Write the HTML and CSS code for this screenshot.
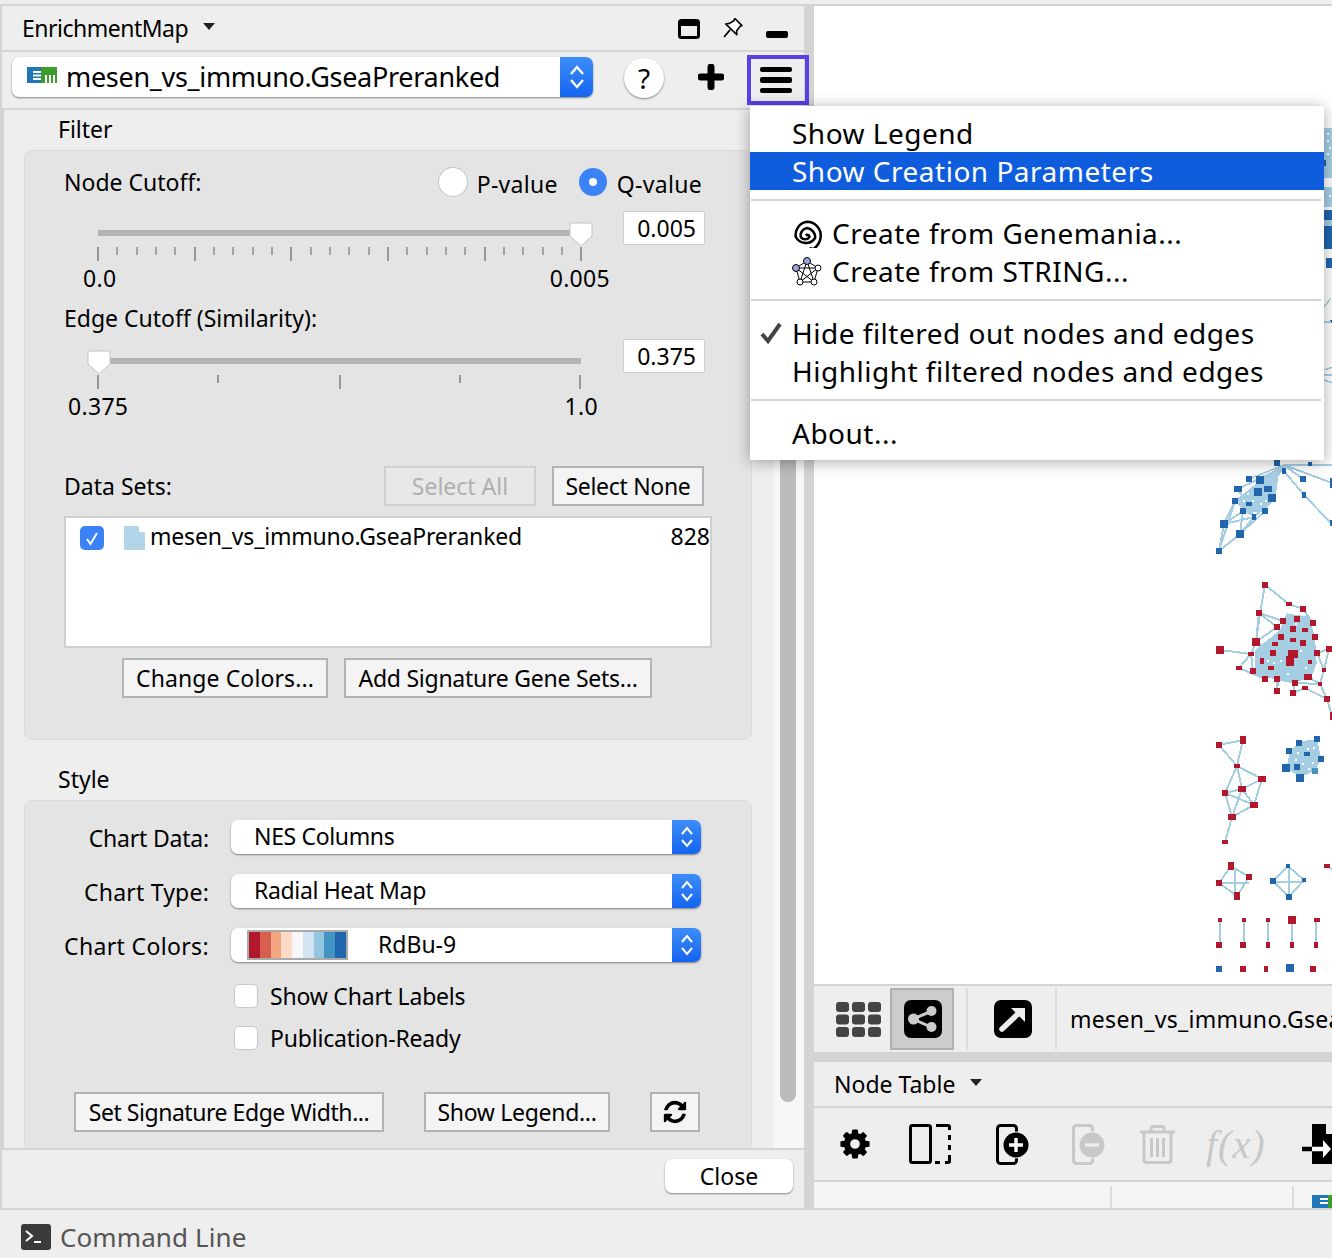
FILE: index.html
```html
<!DOCTYPE html>
<html lang="en">
<head>
  <meta charset="UTF-8" />
  <title>EnrichmentMap</title>
  <link rel="stylesheet" href="styles.css">
</head>
<body>
  <div class="app">
    <div class="workspace">
      <section class="panel">
        <header class="panel-title">
          <span class="panel-name">EnrichmentMap</span>
          <svg class="caret" width="12" height="8" viewBox="0 0 12 8"><path d="M0 1h12L6 8z" fill="#222"/></svg>
          <svg class="icon-window" width="22" height="20" viewBox="0 0 22 20"><rect x="1.5" y="1.5" width="19" height="17" rx="2" fill="none" stroke="#000" stroke-width="3"/><rect x="1" y="1" width="20" height="6" fill="#000"/></svg>
          <svg class="icon-pin" width="20" height="20" viewBox="1 1 18.500 18.500"><path d="M12 1.5L18.5 8l-2 1-3 4 .3 3.500L3.500 6.500 7 6l4-2.500z" fill="#fff" stroke="#000" stroke-width="1.500" stroke-linejoin="round"/><path d="M7.500 12L2 18.500" stroke="#000" stroke-width="1.500"/></svg>
          <span class="icon-min"></span>
        </header>

        <div class="panel-toolbar">
          <div class="combo combo-map">
            <svg class="logo" width="30" height="16" viewBox="0 0 30 16"><rect width="15" height="16" fill="#1f77b4"/><path d="M6 4h8v2H6zM6 7.500h8v2H6zM6 11h8v2H6z" fill="#fff"/><rect x="14" width="16" height="16" fill="#3c9c2c"/><path d="M18 8h2v8h-2zM22 8h2v8h-2zM26 8h2v8h-2z" fill="#fff"/></svg>
            <span class="combo-text">mesen_vs_immuno.GseaPreranked</span>
            <span class="combo-arrows combo-arrows-lg"><svg width="16" height="26" viewBox="0 0 16 26"><path d="M2 10l6-7 6 7M2 16l6 7 6-7" fill="none" stroke="#fff" stroke-width="2.400"/></svg></span>
          </div>
          <button class="help">?</button>
          <svg class="icon-plus" width="26" height="26" viewBox="0 0 26 26"><path d="M13 3v20M3 13h20" stroke="#000" stroke-width="7" stroke-linecap="round"/></svg>
          <div class="menu-button">
            <span></span><span></span><span></span>
          </div>
        </div>

        <div class="scroll">
          <div class="scroll-content">
            <h2 class="section-title">Filter</h2>
            <div class="group group-filter">
              <div class="cutoff-head">
                <span class="cutoff-label">Node Cutoff:</span>
                <span class="radio"></span><span class="radio-text">P-value</span>
                <span class="radio radio-on"></span><span class="radio-text">Q-value</span>
              </div>

              <div class="slider-row">
                <div class="slider">
                  <div class="track"></div>
                  <svg class="thumb thumb-end" width="24" height="25" viewBox="0 0 24 25"><path d="M1 3a2 2 0 012-2h18a2 2 0 012 2v11l-11 10L1 14z" fill="#fff" stroke="#c4c4c4"/></svg>
                  <svg class="ticks" width="500" height="14" viewBox="0 0 500 14">
                    <path d="M1 0v14M98 0v14M194 0v14M291 0v14M388 0v14M484 0v14" stroke="#777" stroke-width="1.400"/>
                    <path d="M20 0v8M40 0v8M59 0v8M78 0v8M117 0v8M136 0v8M156 0v8M175 0v8M214 0v8M233 0v8M252 0v8M272 0v8M310 0v8M330 0v8M349 0v8M368 0v8M407 0v8M426 0v8M446 0v8M465 0v8" stroke="#888" stroke-width="1.400"/>
                  </svg>
                  <div class="scale scale-node"><span>0.0</span><span>0.005</span></div>
                </div>
                <div class="value">0.005</div>
              </div>

              <div class="edge-label">Edge Cutoff (Similarity):</div>

              <div class="slider-row slider-row-edge">
                <div class="slider">
                  <div class="track"></div>
                  <svg class="thumb thumb-start" width="24" height="25" viewBox="0 0 24 25"><path d="M1 3a2 2 0 012-2h18a2 2 0 012 2v11l-11 10L1 14z" fill="#fff" stroke="#c4c4c4"/></svg>
                  <svg class="ticks" width="500" height="14" viewBox="0 0 500 14">
                    <path d="M1 0v14M243 0v14M483 0v14" stroke="#777" stroke-width="1.400"/>
                    <path d="M121 0v8M363 0v8" stroke="#777" stroke-width="1.400"/>
                  </svg>
                  <div class="scale scale-edge"><span>0.375</span><span>1.0</span></div>
                </div>
                <div class="value">0.375</div>
              </div>

              <div class="datasets-head">
                <span class="datasets-label">Data Sets:</span>
                <button class="btn btn-disabled btn-select">Select All</button>
                <button class="btn btn-select">Select None</button>
              </div>

              <div class="dataset-list">
                <div class="dataset">
                  <span class="check check-on"><svg width="24" height="24" viewBox="0 0 24 24"><path d="M7 13l3.500 5L17 7" fill="none" stroke="#fff" stroke-width="2"/></svg></span>
                  <svg class="file" width="22" height="24" viewBox="0 0 22 24"><path d="M0 0h14l7 7v17H0z" fill="#b2d5e8"/><path d="M15 0l6 6h-6z" fill="#fff"/></svg>
                  <span class="dataset-name">mesen_vs_immuno.GseaPreranked</span>
                  <span class="dataset-count">828</span>
                </div>
              </div>

              <div class="btn-row btn-row-colors">
                <button class="btn btn-colors">Change Colors...</button>
                <button class="btn btn-signature">Add Signature Gene Sets...</button>
              </div>
            </div>

            <h2 class="section-title section-title-style">Style</h2>
            <div class="group group-style">
              <div class="form-row">
                <label class="form-label form-label-data">Chart Data:</label>
                <div class="combo combo-form">
                  <span class="combo-text">NES Columns</span>
                  <span class="combo-arrows"><svg width="14" height="24" viewBox="0 0 14 24"><path d="M2 9l5-6 5 6M2 15l5 6 5-6" fill="none" stroke="#fff" stroke-width="2"/></svg></span>
                </div>
              </div>
              <div class="form-row">
                <label class="form-label">Chart Type:</label>
                <div class="combo combo-form">
                  <span class="combo-text">Radial Heat Map</span>
                  <span class="combo-arrows"><svg width="14" height="24" viewBox="0 0 14 24"><path d="M2 9l5-6 5 6M2 15l5 6 5-6" fill="none" stroke="#fff" stroke-width="2"/></svg></span>
                </div>
              </div>
              <div class="form-row">
                <label class="form-label form-label-colors">Chart Colors:</label>
                <div class="combo combo-form combo-palette">
                  <div class="swatches">
                    <i class="sw1"></i><i class="sw2"></i><i class="sw3"></i><i class="sw4"></i><i class="sw5"></i><i class="sw6"></i><i class="sw7"></i><i class="sw8"></i><i class="sw9"></i>
                  </div>
                  <span class="combo-text">RdBu-9</span>
                  <span class="combo-arrows"><svg width="14" height="24" viewBox="0 0 14 24"><path d="M2 9l5-6 5 6M2 15l5 6 5-6" fill="none" stroke="#fff" stroke-width="2"/></svg></span>
                </div>
              </div>

              <div class="check-row check-row-first"><span class="check"></span>Show Chart Labels</div>
              <div class="check-row"><span class="check"></span>Publication-Ready</div>

              <div class="btn-row btn-row-style">
                <button class="btn btn-edge">Set Signature Edge Width...</button>
                <button class="btn btn-legend">Show Legend...</button>
                <button class="btn btn-refresh">
                  <svg width="26" height="26" viewBox="0 0 1792 1792"><path d="M1639 1056q0 5-1 7-64 268-268 434.5t-478 166.5q-146 0-282.5-55t-243.5-157l-129 129q-19 19-45 19t-45-19-19-45v-448q0-26 19-45t45-19h448q26 0 45 19t19 45-19 45l-137 137q71 66 161 102t187 36q134 0 250-65t186-179q11-17 53-117 8-23 30-23h192q13 0 22.5 9.5t9.5 22.5zm25-800v448q0 26-19 45t-45 19h-448q-26 0-45-19t-19-45 19-45l138-138q-148-137-349-137-134 0-250 65t-186 179q-11 17-53 117-8 23-30 23h-199q-13 0-22.5-9.5t-9.5-22.5v-7q65-268 270-434.5t480-166.5q146 0 284 55.5t245 156.5l130-129q19-19 45-19t45 19 19 45z"/></svg>
                </button>
              </div>
            </div>
          </div>
          <div class="scrollbar"><div class="scrollbar-thumb"></div></div>
        </div>

        <footer class="panel-footer">
          <button class="close">Close</button>
        </footer>
      </section>

      <section class="main">
        <svg class="network" width="518" height="978" viewBox="814 6 518 978">
          <g transform="translate(1280 100) scale(.3333)">
            <path d="M133 85h23v150h-23zM133 260h23v60h-23zM133 360h23v20h-23z" fill="#a6cee3"/>
            <path d="M133 330h23v30h-23zM133 378h23v70h-23zM138 475h18v30h-18zM133 180h6v18h-6zM150 660h6v10h-6z" fill="#2166ac"/>
            <path d="M133 620l20-25M133 667h20M133 810l23-8M133 825h23M133 840l23 8" stroke="#a6cee3" stroke-width="5" fill="none"/>
            <path d="M142 100h6v6h-6zM142 120h6v6h-6zM148 140h6v6h-6zM142 160h6v6h-6zM146 285h6v6h-6z" fill="#fff"/>
          </g>

          <g transform="translate(1180 450) scale(.3333)">
            <path d="M172 148L240 90 300 48 285 150 250 185 190 190z" fill="#a6cee3"/>
            <path d="M312 45L207 87M312 50L264 117M312 50L174 117M312 50L165 153M312 45H456M312 63L372 135 453 219M312 45L369 87M312 45L456 99M132 222L117 303 180 252M132 222L165 153M132 222L222 201M132 222L189 183M180 252L222 201M180 252L189 183M165 153L117 303M165 153L222 201M174 117L222 201M255 183L180 252M276 144L222 201" stroke="#a6cee3" stroke-width="6" fill="none"/>
            <path d="M200 130h6v6h-6zM215 150h6v6h-6zM240 160h6v6h-6zM190 150h6v6h-6zM255 150h6v6h-6z" fill="#fff"/>
            <g fill="#2166ac">
              <rect x="282" y="29" width="18" height="18"/><rect x="384" y="36" width="12" height="12"/><rect x="306" y="54" width="12" height="18"/><rect x="360" y="78" width="18" height="18"/><rect x="450" y="84" width="6" height="30"/><rect x="198" y="78" width="18" height="18"/><rect x="228" y="78" width="24" height="24"/><rect x="162" y="108" width="24" height="18"/><rect x="222" y="114" width="24" height="24"/><rect x="252" y="108" width="24" height="18"/><rect x="156" y="144" width="18" height="18"/><rect x="198" y="156" width="18" height="12"/><rect x="264" y="132" width="24" height="24"/><rect x="180" y="174" width="18" height="18"/><rect x="246" y="174" width="18" height="18"/><rect x="216" y="192" width="12" height="18"/><rect x="366" y="126" width="12" height="18"/><rect x="120" y="210" width="24" height="24"/><rect x="168" y="240" width="24" height="24"/><rect x="108" y="294" width="18" height="18"/><rect x="450" y="210" width="6" height="18"/>
            </g>
            <path d="M225 600L300 540 320 490 385 500 405 560 410 640 395 680 340 700 290 690 225 670z" fill="#a6cee3"/>
            <path d="M255 405L240 490 228 576M255 405L327 462 369 477M237 489L291 531M237 489L309 513M120 600L213 612M213 612L228 576M213 612L177 654M213 612L219 663M219 663L255 687M411 609L447 597 432 660 420 702 441 747 456 798M441 747L375 714M291 723L291 687M339 729L345 699M339 729L375 714M384 681L420 702M300 640L291 723M255 687L345 640M219 663L330 633M228 576L330 633M237 489L228 576M411 609L432 660M177 654L255 687M345 699L420 702M369 477L399 519M291 531L228 576" stroke="#a6cee3" stroke-width="6" fill="none"/>
            <path d="M260 630h6v6h-6zM280 636h6v6h-6zM300 630h6v6h-6zM360 600h6v6h-6zM375 650h6v6h-6zM345 520h6v6h-6zM320 670h6v6h-6z" fill="#fff"/>
            <g fill="#b2182b">
              <rect x="246" y="396" width="18" height="18"/><rect x="318" y="456" width="18" height="12"/><rect x="360" y="468" width="18" height="18"/><rect x="228" y="480" width="18" height="18"/><rect x="342" y="498" width="18" height="18"/><rect x="390" y="510" width="18" height="18"/><rect x="300" y="504" width="18" height="18"/><rect x="282" y="522" width="18" height="18"/><rect x="330" y="528" width="18" height="18"/><rect x="366" y="534" width="18" height="12"/><rect x="396" y="552" width="18" height="18"/><rect x="294" y="552" width="18" height="18"/><rect x="330" y="564" width="18" height="12"/><rect x="216" y="564" width="24" height="24"/><rect x="276" y="576" width="18" height="12"/><rect x="360" y="570" width="18" height="18"/><rect x="108" y="588" width="24" height="24"/><rect x="204" y="606" width="18" height="12"/><rect x="270" y="600" width="18" height="18"/><rect x="324" y="600" width="30" height="24"/><rect x="402" y="600" width="18" height="18"/><rect x="438" y="588" width="18" height="18"/><rect x="240" y="624" width="12" height="18"/><rect x="318" y="618" width="24" height="30"/><rect x="384" y="630" width="12" height="12"/><rect x="168" y="648" width="18" height="12"/><rect x="264" y="648" width="18" height="12"/><rect x="210" y="654" width="18" height="18"/><rect x="426" y="654" width="12" height="12"/><rect x="246" y="678" width="18" height="18"/><rect x="282" y="678" width="18" height="18"/><rect x="372" y="672" width="24" height="18"/><rect x="336" y="690" width="18" height="18"/><rect x="414" y="696" width="12" height="12"/><rect x="366" y="708" width="18" height="12"/><rect x="282" y="714" width="18" height="18"/><rect x="330" y="720" width="18" height="18"/><rect x="432" y="738" width="18" height="18"/><rect x="450" y="786" width="6" height="24"/>
            </g>
          </g>

          <g transform="translate(1180 720) scale(.3333)">
            <path d="M117 75L189 60 171 138ZM171 138L246 177 186 207 171 138 135 219 186 207 222 255 246 177M135 219L222 255M135 219L156 291 186 207M222 255L156 291 135 366M153 438L207 471 171 528 117 489ZM117 489H207M165 450V520M324 438L372 480 327 531 279 483ZM279 487H372M326 438V531M441 438L456 447M120 600V675M192 600V675M264 600V675M336 600V675M408 600V675" stroke="#a6cee3" stroke-width="6" fill="none"/>
            <path d="M330 90L370 62 411 60 424 115 405 153 360 172 320 144z" fill="#a6cee3"/>
            <path d="M350 95h6v6h-6zM380 85h6v6h-6zM395 125h6v6h-6zM365 130h6v6h-6zM345 118h6v6h-6zM385 145h6v6h-6zM400 80h6v6h-6z" fill="#fff"/>
            <g fill="#b2182b">
              <rect x="108" y="66" width="18" height="18"/><rect x="180" y="48" width="18" height="24"/><rect x="162" y="132" width="18" height="12"/><rect x="234" y="168" width="24" height="18"/><rect x="126" y="210" width="18" height="18"/><rect x="174" y="198" width="24" height="18"/><rect x="210" y="246" width="24" height="18"/><rect x="144" y="282" width="24" height="18"/><rect x="126" y="360" width="18" height="12"/>
              <rect x="144" y="426" width="18" height="24"/><rect x="198" y="462" width="18" height="18"/><rect x="108" y="480" width="18" height="18"/><rect x="162" y="516" width="18" height="24"/><rect x="432" y="432" width="18" height="12"/>
              <rect x="114" y="594" width="12" height="12"/><rect x="186" y="594" width="12" height="12"/><rect x="258" y="594" width="12" height="12"/><rect x="324" y="588" width="24" height="24"/><rect x="402" y="594" width="18" height="12"/>
              <rect x="108" y="666" width="18" height="18"/><rect x="180" y="666" width="18" height="18"/><rect x="258" y="666" width="12" height="18"/><rect x="330" y="666" width="12" height="18"/><rect x="402" y="666" width="12" height="18"/>
              <rect x="180" y="738" width="18" height="18"/><rect x="252" y="738" width="12" height="18"/><rect x="390" y="738" width="18" height="18"/>
            </g>
            <g fill="#2166ac">
              <rect x="402" y="48" width="18" height="18"/><rect x="348" y="60" width="18" height="18"/><rect x="318" y="84" width="18" height="18"/><rect x="372" y="96" width="18" height="12"/><rect x="414" y="108" width="18" height="18"/><rect x="342" y="132" width="18" height="18"/><rect x="306" y="132" width="24" height="24"/><rect x="348" y="162" width="24" height="24"/>
              <rect x="318" y="432" width="12" height="12"/><rect x="366" y="474" width="12" height="12"/><rect x="270" y="474" width="18" height="18"/><rect x="318" y="522" width="18" height="18"/>
              <rect x="108" y="738" width="18" height="18"/><rect x="318" y="732" width="24" height="24"/>
            </g>
            <rect x="396" y="144" width="18" height="18" fill="#4393c3"/>
          </g>
        </svg>

        <div class="view-bar">
          <svg class="icon-grid" width="45" height="35" viewBox="0 0 45 35" fill="#444">
            <rect width="13" height="10" rx="3"/><rect x="16" width="13" height="10" rx="3"/><rect x="32" width="13" height="10" rx="3"/>
            <rect y="12.500" width="13" height="10" rx="3"/><rect x="16" y="12.500" width="13" height="10" rx="3"/><rect x="32" y="12.500" width="13" height="10" rx="3"/>
            <rect y="25" width="13" height="10" rx="3"/><rect x="16" y="25" width="13" height="10" rx="3"/><rect x="32" y="25" width="13" height="10" rx="3"/>
          </svg>
          <div class="view-active">
            <svg width="38" height="38" viewBox="0 0 38 38"><rect width="38" height="38" rx="7" fill="#000"/><path d="M28 11L9 19l18 8" fill="none" stroke="#ccc" stroke-width="3"/><circle cx="9.500" cy="19" r="5.500" fill="#ccc"/><circle cx="27.500" cy="11" r="5" fill="#ccc"/><circle cx="27.500" cy="27" r="5" fill="#ccc"/></svg>
          </div>
          <span class="view-sep"></span>
          <svg class="icon-detach" width="38" height="38" viewBox="0 0 38 38"><rect width="38" height="38" rx="7" fill="#000"/><path d="M8 29L26 12" stroke="#eee" stroke-width="5.500" stroke-linecap="round"/><path d="M17 8h14v14z" fill="#eee"/></svg>
          <span class="view-sep view-sep-2"></span>
          <span class="view-name">mesen_vs_immuno.GseaPreranked</span>
        </div>

        <div class="table-title">
          <span>Node Table</span>
          <svg class="caret" width="12" height="8" viewBox="0 0 12 8"><path d="M0 1h12L6 8z" fill="#222"/></svg>
        </div>

        <div class="table-tools">
          <svg class="tool-gear" width="34" height="34" viewBox="0 0 1792 1792"><path d="M1152 896q0-106-75-181t-181-75-181 75-75 181 75 181 181 75 181-75 75-181zm512-109v222q0 12-8 23t-20 13l-185 28q-19 54-39 91 35 50 107 138 10 12 10 25t-9 23q-27 37-99 108t-94 71q-12 0-26-9l-138-108q-44 23-91 38-16 136-29 186-7 28-36 28h-222q-14 0-24.5-8.5t-11.5-21.5l-28-184q-49-16-90-37l-141 107q-10 9-25 9-14 0-25-11-126-114-165-168-7-10-7-23 0-12 8-23 15-21 51-66.5t54-70.5q-27-50-41-99l-183-27q-13-2-21-12.5t-8-23.5v-222q0-12 8-23t19-13l186-28q14-46 39-92-40-57-107-138-10-12-10-24 0-10 9-23 26-36 98.5-107.5t94.5-71.5q13 0 26 10l138 107q44-23 91-38 16-136 29-186 7-28 36-28h222q14 0 24.5 8.5t11.5 21.5l28 184q49 16 90 37l142-107q9-9 24-9 13 0 25 10 129 119 165 170 7 8 7 22 0 12-8 23-15 21-51 66.5t-54 70.5q26 50 41 98l183 28q13 2 21 12.5t8 23.5z"/></svg>
          <svg class="tool-columns" width="42" height="40" viewBox="0 0 42 40" fill="none" stroke="#000" stroke-width="3"><rect x="1.500" y="1.500" width="20" height="37" rx="2"/><path d="M27 1.500h12a1.500 1.500 0 011.500 1.500v3M40.500 11v5M40.500 21v5M40.500 31v6a1.500 1.500 0 01-1.500 1.500h-3M31 38.500h-5"/></svg>
          <svg class="tool-add" width="33" height="41" viewBox="0 0 33 41"><rect x="1.500" y="1.500" width="19" height="38" rx="3" fill="none" stroke="#000" stroke-width="3"/><circle cx="20" cy="21" r="13.500" fill="#eee"/><circle cx="20" cy="21" r="12.500" fill="#000"/><path d="M20 14v14M13 21h14" stroke="#fff" stroke-width="3.400"/></svg>
          <svg class="tool-remove" width="33" height="41" viewBox="0 0 33 41"><rect x="1.500" y="1.500" width="19" height="38" rx="3" fill="none" stroke="#c8c8c8" stroke-width="3"/><circle cx="20" cy="21" r="13.500" fill="#eee"/><circle cx="20" cy="21" r="12.500" fill="#c8c8c8"/><path d="M13 21h14" stroke="#eee" stroke-width="3.400"/></svg>
          <svg class="tool-trash" width="35" height="39" viewBox="0 0 35 39" fill="none" stroke="#c8c8c8" stroke-width="3"><path d="M0 7h35M11 7V4a2.500 2.500 0 012.500-2.500h8A2.500 2.500 0 0124 4v3"/><path d="M4 7v28a2.500 2.500 0 002.500 2.500h22A2.500 2.500 0 0031 35V7"/><path d="M11.500 13v19M17.500 13v19M23.500 13v19"/></svg>
          <span class="tool-fx">f(x)</span>
          <svg class="tool-import" width="30" height="40" viewBox="0 0 30 40"><path d="M10 0h14l6 6v34H10z" fill="#000"/><path d="M26 0l4 4v6h-6V0z" fill="#eee"/><path d="M0 25h20" stroke="#000" stroke-width="4.500" stroke-linecap="round"/><path d="M10 25h13" stroke="#fff" stroke-width="4.500"/><path d="M21 16l8 9-8 9z" fill="#fff"/></svg>
        </div>

        <div class="table-head">
          <span class="head-cell head-cell-a"></span>
          <span class="head-cell head-cell-b"></span>
          <svg class="head-logo" width="20" height="13" viewBox="0 0 20 13"><rect width="16" height="13" fill="#1f77b4"/><path d="M8 3h8v2H8zM8 7h8v2H8z" fill="#fff"/><rect x="16" width="4" height="13" fill="#3c9c2c"/></svg>
        </div>
      </section>
    </div>

    <footer class="command">
      <svg width="30" height="26" viewBox="0 0 30 26"><rect width="30" height="26" rx="3" fill="#3a3a3a"/><path d="M5 7l6 5-6 5" fill="none" stroke="#fff" stroke-width="2"/><path d="M13 18h7" stroke="#fff" stroke-width="2"/></svg>
      <span>Command Line</span>
    </footer>

    <div class="menu">
      <div class="menu-item">Show Legend</div>
      <div class="menu-item menu-item-active">Show Creation Parameters</div>
      <div class="menu-sep"></div>
      <div class="menu-item menu-item-icon">
        <svg width="30" height="30" viewBox="2 0 24 24" fill="none" stroke="#000" stroke-width="2"><path d="M13 14a1.800 1.800 0 013 1 4 4 0 01-7 0 6 6 0 015-7 7.500 7.500 0 016.500 8A9 9 0 015 15 10.500 10.500 0 0114 3a11 11 0 0111 11c0 5-2.500 8.500-6 11l-3-1"/></svg>
        Create from Genemania...
      </div>
      <div class="menu-item menu-item-icon">
        <svg width="30" height="30" viewBox="0 0 30 30" fill="none" stroke="#000" stroke-width="1"><path d="M15 5L26 12 22 26H8L4 12ZM15 5L22 26M15 5L8 26M4 12H26M4 12L22 26M26 12L8 26"/><circle cx="15" cy="5" r="3.500" fill="#9aa6d8"/><circle cx="4" cy="12" r="3.500" fill="#9aa6d8"/><circle cx="26" cy="12" r="3" fill="#fff"/><circle cx="8" cy="26" r="3" fill="#fff"/><circle cx="22" cy="26" r="3" fill="#fff"/></svg>
        Create from STRING...
      </div>
      <div class="menu-sep"></div>
      <div class="menu-item">
        <svg class="menu-check" width="22" height="22" viewBox="0 0 22 22"><path d="M2 12l6 7L20 2" fill="none" stroke="#444" stroke-width="4"/></svg>
        Hide filtered out nodes and edges
      </div>
      <div class="menu-item">Highlight filtered nodes and edges</div>
      <div class="menu-sep"></div>
      <div class="menu-item">About...</div>
    </div>
  </div>
</body>
</html>
```

FILE: styles.css
```css
* {
  box-sizing: border-box;
}

body {
  margin: 0;
  background-color: #eee;
  color: #000;
  font-family: "Noto Sans", sans-serif;
  font-size: 23px;
  overflow: hidden;
}

button {
  font-family: inherit;
  font-size: inherit;
  color: inherit;
  padding: 0;
}

svg {
  flex-shrink: 0;
}

.app {
  position: relative;
  width: 1332px;
  height: 1258px;
  padding-top: 4px;
}

.workspace {
  display: flex;
  height: 1206px;
  padding-top: 2px;
  padding-bottom: 2px;
  background-color: #d4d4d4;
}

/* left panel */
.panel {
  display: flex;
  flex-direction: column;
  gap: 2px;
  width: 804px;
  padding-left: 2px;
  flex-shrink: 0;
}

.panel-title {
  display: flex;
  align-items: center;
  height: 44px;
  padding-left: 20px;
  background-color: #eee;
}

.panel-name {
  line-height: 44px;
  letter-spacing: -0.5px;
}

.caret {
  margin-left: 15px;
  margin-bottom: 4px;
}

.icon-window {
  margin-left: auto;
  margin-top: 2px;
}

.icon-pin {
  margin-left: 23px;
}

.icon-min {
  width: 22px;
  height: 7px;
  margin: 12px 16px 0 23px;
  border-radius: 2px;
  background-color: #000;
}

.panel-toolbar {
  display: flex;
  align-items: center;
  height: 56px;
  padding-left: 10px;
  background-color: #eee;
}

.combo {
  display: flex;
  align-items: center;
  flex-shrink: 0;
  background-color: #fff;
  border-radius: 7px;
  box-shadow: 0 1px 2px rgba(0, 0, 0, 0.45);
}

.combo-map {
  width: 581px;
  height: 40px;
  margin-bottom: 6px;
  padding-left: 15px;
  font-size: 27px;
  letter-spacing: -0.3px;
}

.combo-map .combo-text {
  margin-bottom: 1px;
}

.logo {
  margin-right: 9px;
  margin-bottom: 4px;
}

.combo-arrows {
  display: flex;
  align-items: center;
  justify-content: center;
  align-self: stretch;
  width: 29px;
  margin-left: auto;
  border-radius: 0 7px 7px 0;
  background: linear-gradient(#3d8df8, #1464f0);
}

.combo-arrows-lg {
  width: 33px;
}

.help {
  flex-shrink: 0;
  width: 40px;
  height: 40px;
  margin-left: 31px;
  margin-bottom: 4px;
  border: none;
  border-radius: 50%;
  background-color: #fff;
  box-shadow: 0 1px 2px rgba(0, 0, 0, 0.45);
  font-size: 28px;
  line-height: 38px;
}

.icon-plus {
  margin-left: 34px;
  margin-bottom: 6px;
}

.menu-button {
  display: flex;
  flex-direction: column;
  gap: 5px;
  align-items: center;
  justify-content: center;
  flex-shrink: 0;
  width: 62px;
  height: 50px;
  margin-left: 23px;
  padding-right: 4px;
  border: 4px solid #5b3fe4;
}

.menu-button span {
  width: 32px;
  height: 5.5px;
  border-radius: 2px;
  background-color: #000;
}

.scroll {
  display: flex;
  height: 1038px;
  margin-left: 2px;
  background-color: #eee;
}

.scroll-content {
  width: 770px;
  padding: 0 22px 0 20px;
}

.scrollbar {
  width: 30px;
  background-color: #f7f7f7;
}

.scrollbar-thumb {
  width: 16px;
  height: 702px;
  margin: 290px 0 0 6px;
  border-radius: 8px;
  background-color: #bbb;
}

.section-title {
  height: 40px;
  margin: 0;
  padding-left: 34px;
  font-size: 23px;
  font-weight: normal;
  line-height: 38px;
}

.section-title-style {
  height: 60px;
  padding-top: 20px;
}

.group {
  padding: 0 39px;
  border: 1px solid #dcdcdc;
  border-radius: 8px;
  background-color: #e4e4e4;
}

.group-filter {
  height: 590px;
}

.group-style {
  height: 348px;
  border-bottom: none;
  border-radius: 8px 8px 0 0;
}

/* filter group */
.cutoff-head {
  display: flex;
  align-items: center;
  height: 34px;
  margin-top: 14px;
  padding-right: 10px;
}

.cutoff-label {
  margin-right: auto;
}

.radio {
  flex-shrink: 0;
  width: 28px;
  height: 28px;
  border-radius: 50%;
  background-color: #fff;
  box-shadow: 0 0 0 1px #c4c4c4;
}

.radio-on {
  margin-left: 21px;
  border: 10px solid #3b82f6;
  box-shadow: none;
}

.radio-text {
  margin-left: 10px;
  margin-top: 4px;
  letter-spacing: 0.3px;
}

.slider-row {
  display: flex;
  margin-top: 12px;
}

.slider-row-edge {
  margin-top: 9px;
}

.slider {
  position: relative;
  width: 559px;
  height: 79px;
  padding-top: 19px;
}

.track {
  width: 483px;
  height: 6px;
  margin-left: 34px;
  background-color: #b4b4b4;
}

.thumb {
  position: absolute;
  top: 11px;
}

.thumb-end {
  left: 505px;
}

.thumb-start {
  left: 23px;
}

.ticks {
  display: block;
  margin: 11px 0 0 33px;
}

.scale {
  display: flex;
  justify-content: space-between;
  margin-top: 5px;
  line-height: 24px;
  letter-spacing: 0.3px;
}

.scale-node {
  width: 527px;
  margin-left: 19px;
}

.scale-edge {
  width: 530px;
  margin-left: 4px;
}

.value {
  width: 82px;
  height: 34px;
  padding-right: 8px;
  border: 1px solid #d0d0d0;
  background-color: #fff;
  line-height: 32px;
  text-align: right;
}

.edge-label {
  margin-top: 16px;
  line-height: 24px;
}

.datasets-head {
  display: flex;
  align-items: center;
  height: 40px;
  margin-top: 48px;
  padding-right: 8px;
  gap: 16px;
}

.datasets-label {
  margin-right: auto;
}

.btn {
  flex-shrink: 0;
  height: 40px;
  border: 2px solid #b4b4b4;
  background-color: #f4f4f4;
  line-height: 34px;
  letter-spacing: -0.3px;
}

.btn-disabled {
  border-color: #cfcfcf;
  background-color: #e8e8e8;
  color: #b0b0b0;
  letter-spacing: 0;
}

.btn-select {
  width: 152px;
}

.dataset-list {
  height: 132px;
  margin-top: 10px;
  border: 2px solid #d0d0d0;
  background-color: #fff;
}

.dataset {
  display: flex;
  align-items: center;
  height: 36px;
  margin-top: 6px;
  padding: 0 0 8px 14px;
}

.check {
  flex-shrink: 0;
  width: 24px;
  height: 24px;
  border: 1px solid #c8c8c8;
  border-radius: 5px;
  background-color: #fff;
}

.check-on {
  border: none;
  background-color: #3b82f6;
}

.check-on svg {
  display: block;
}

.file {
  margin-left: 20px;
}

.dataset-name {
  margin-left: 4px;
  margin-bottom: 4px;
  letter-spacing: -0.18px;
}

.dataset-count {
  margin-left: auto;
  margin-bottom: 4px;
}

.btn-row {
  display: flex;
}

.btn-row-colors {
  gap: 16px;
  margin: 10px 0 0 58px;
}

.btn-colors {
  width: 206px;
  letter-spacing: 0.1px;
}

.btn-signature {
  width: 308px;
  letter-spacing: -0.25px;
}

/* style group */
.form-row {
  display: flex;
  align-items: center;
  gap: 22px;
  margin-top: 20px;
}

.form-row:first-child {
  margin-top: 19px;
}

.form-label {
  width: 145px;
  padding-top: 2px;
  line-height: 28px;
  text-align: right;
  letter-spacing: 0.2px;
}

.form-label-data {
  letter-spacing: -0.2px;
}

.form-label-colors {
  letter-spacing: 0.35px;
}

.combo-form {
  width: 470px;
  height: 34px;
  padding-left: 23px;
  letter-spacing: -0.35px;
}

.combo-form .combo-text {
  margin-bottom: 2px;
}

.combo-palette {
  padding-left: 16px;
  letter-spacing: 0;
}

.swatches {
  display: flex;
  width: 101px;
  height: 30px;
  margin-right: 30px;
  border: 2px solid #aaa;
}

.swatches i {
  flex: 1;
}

.sw1 { background-color: #b2182b; }
.sw2 { background-color: #d6604d; }
.sw3 { background-color: #f4a582; }
.sw4 { background-color: #fddbc7; }
.sw5 { background-color: #f7f7f7; }
.sw6 { background-color: #d1e5f0; }
.sw7 { background-color: #92c5de; }
.sw8 { background-color: #4393c3; }
.sw9 { background-color: #2166ac; }

.check-row {
  display: flex;
  align-items: center;
  gap: 12px;
  height: 24px;
  margin: 18px 0 0 170px;
  letter-spacing: -0.2px;
}

.check-row-first {
  margin-top: 22px;
}

.btn-row-style {
  gap: 40px;
  margin: 42px 0 0 10px;
}

.btn-edge {
  width: 310px;
  letter-spacing: -0.45px;
}

.btn-legend {
  width: 186px;
}

.btn-refresh {
  width: 50px;
}

.btn-refresh svg {
  display: block;
  margin: auto;
}

.panel-footer {
  display: flex;
  justify-content: flex-end;
  height: 58px;
  padding: 9px 11px 0 0;
  background-color: #eee;
}

.close {
  width: 128px;
  height: 34px;
  border: none;
  border-radius: 7px;
  background-color: #fff;
  box-shadow: 0 1px 2px rgba(0, 0, 0, 0.45);
  line-height: 30px;
}

/* right side */
.main {
  display: flex;
  flex-direction: column;
  width: 518px;
  margin-left: 10px;
  overflow: hidden;
}

.network {
  display: block;
  background-color: #fff;
  shape-rendering: crispEdges;
}

.view-bar {
  display: flex;
  align-items: center;
  height: 66px;
  margin-top: 2px;
  padding-left: 22px;
  background-color: #eee;
  flex-shrink: 0;
}

.view-active {
  display: flex;
  align-items: center;
  justify-content: center;
  flex-shrink: 0;
  width: 64px;
  height: 62px;
  margin-left: 9px;
  padding-left: 2px;
  border: 2px solid #b0b0b0;
  background-color: #ccc;
}

.view-sep {
  flex-shrink: 0;
  width: 2px;
  height: 62px;
  margin-left: 12px;
  background-color: #ddd;
}

.icon-detach {
  margin-left: 26px;
}

.view-sep-2 {
  margin-left: 23px;
}

.view-name {
  margin-left: 13px;
  white-space: nowrap;
  letter-spacing: 0.3px;
}

.table-title {
  display: flex;
  align-items: center;
  height: 44px;
  margin-top: 10px;
  padding-left: 20px;
  background-color: #eee;
  flex-shrink: 0;
}

.table-tools {
  display: flex;
  align-items: center;
  height: 72px;
  margin-top: 2px;
  padding-left: 24px;
  background-color: #eee;
  flex-shrink: 0;
}

.tool-columns {
  margin-left: 37px;
}

.tool-add {
  margin-left: 45px;
}

.tool-remove {
  margin-left: 43px;
}

.tool-trash {
  margin-left: 35px;
}

.tool-fx {
  flex-shrink: 0;
  width: 58px;
  margin-left: 31px;
  font-family: "Liberation Serif", serif;
  font-size: 40px;
  font-style: italic;
  color: #c8c8c8;
  white-space: nowrap;
  letter-spacing: 1px;
}

.tool-import {
  margin-left: 38px;
}

.table-head {
  display: flex;
  align-items: flex-end;
  height: 26px;
  margin-top: 2px;
  background-color: #f4f4f4;
  flex-shrink: 0;
}

.head-cell {
  align-self: stretch;
  flex-shrink: 0;
  width: 2px;
  margin-top: 4px;
  background-color: #ddd;
}

.head-cell-a {
  margin-left: 296px;
}

.head-cell-b {
  margin-left: 180px;
}

.head-logo {
  margin-left: 18px;
}

.command {
  display: flex;
  align-items: center;
  gap: 9px;
  height: 48px;
  padding-left: 21px;
  padding-top: 6px;
  color: #555;
  font-size: 26px;
  letter-spacing: 0.1px;
}

/* popup menu */
.menu {
  position: absolute;
  top: 106px;
  left: 750px;
  width: 574px;
  height: 354px;
  padding-top: 8px;
  background-color: #fff;
  box-shadow: 0 2px 14px rgba(0, 0, 0, 0.35);
  font-size: 28px;
  letter-spacing: 0.5px;
}

.menu-item {
  position: relative;
  display: flex;
  align-items: center;
  height: 38px;
  padding-left: 42px;
  white-space: nowrap;
}

.menu-item-active {
  background-color: #0f5cdc;
  color: #fff;
}

.menu-item-icon {
  gap: 10px;
}

.menu-check {
  position: absolute;
  left: 10px;
  top: 8px;
}

.menu-sep {
  height: 2px;
  margin: 9px 3px 13px 1px;
  background-color: #d4d4d4;
}
```
